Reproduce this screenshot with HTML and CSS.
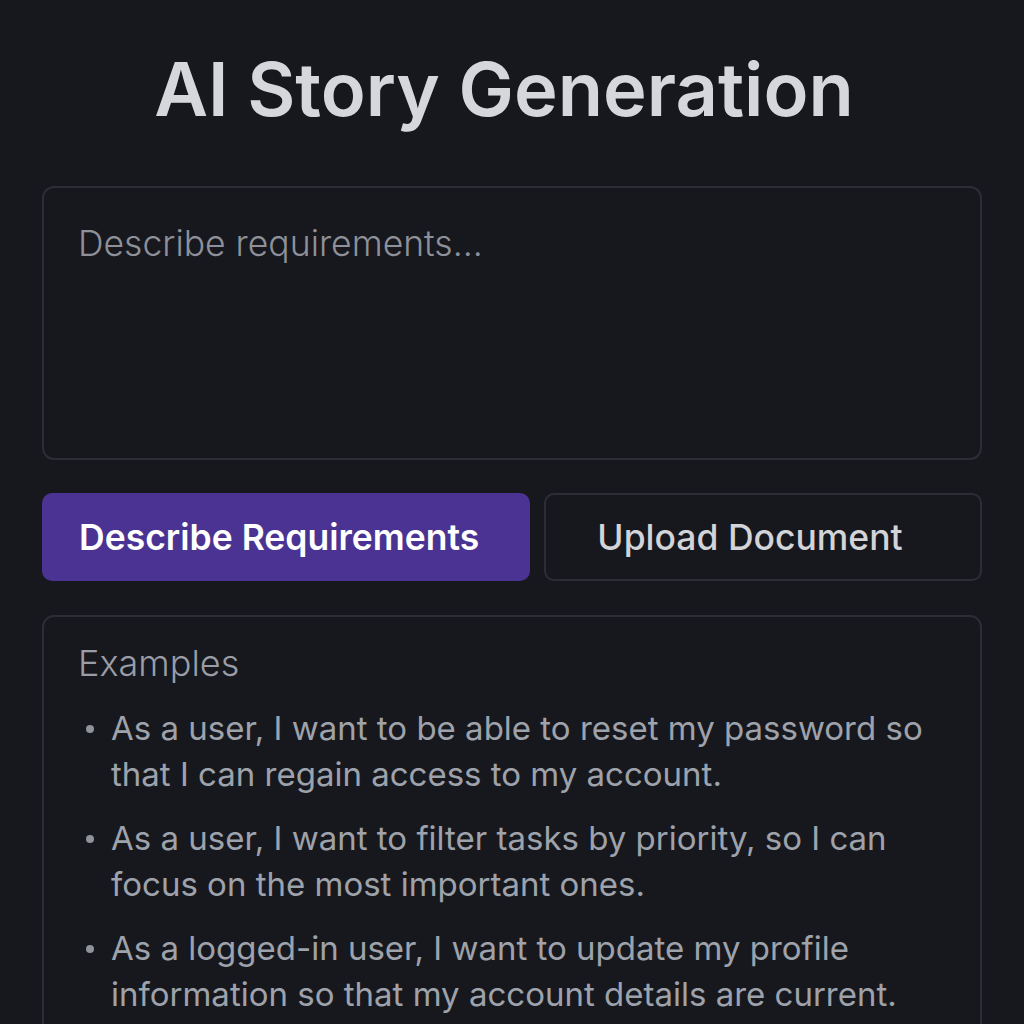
FILE: index.html
```html
<!DOCTYPE html>
<html lang="en">
<head>
<meta charset="utf-8">
<title>AI Story Generation</title>
<link rel="stylesheet" href="styles.css">
</head>
<body>
<main class="page">
  <h1 class="title">AI Story Generation</h1>
  <textarea class="req-input" placeholder="Describe requirements..."></textarea>
  <div class="tabs">
    <button class="tab tab-active">Describe Requirements</button>
    <button class="tab tab-outline">Upload Document</button>
  </div>
  <section class="examples">
    <h2 class="examples-title">Examples</h2>
    <ul class="example-list">
      <li>As a user, I want to be able to reset my password so that I can regain access to my account.</li>
      <li>As a user, I want to filter tasks by priority, so I can focus on the most important ones.</li>
      <li>As a logged-in user, I want to update my profile information so that my account details are current.</li>
    </ul>
  </section>
</main>
</body>
</html>
```
FILE: styles.css
```css
* { box-sizing: border-box; }
html, body { margin: 0; padding: 0; }
body {
  background: #17181e;
  font-family: Inter, "Noto Sans", sans-serif;
  color: #d6d7db;
  overflow: hidden;
  height: 1024px;
}
.page {
  padding: 0 42px;
  display: flex;
  flex-direction: column;
}
.title {
  margin: 0;
  height: 186px;
  display: flex;
  align-items: center;
  justify-content: center;
  padding: 0 16px 8px 0;
  font-size: 74px;
  font-weight: 600;
  color: #d6d7db;
  letter-spacing: 0;
}
.req-input {
  display: block;
  width: 100%;
  height: 274px;
  resize: none;
  background: #17181e;
  border: 2px solid #2c2e35;
  border-radius: 12px;
  padding: 34px 34px;
  font-family: Inter, "Noto Sans", sans-serif;
  font-size: 35.5px;
  font-weight: 300;
  color: #d6d7db;
  outline: none;
}
.req-input::placeholder { color: #8e919a; opacity: 1; }
.tabs {
  margin-top: 33px;
  display: flex;
  gap: 14px;
}
.tab {
  height: 88px;
  border-radius: 10px;
  font-family: Inter, "Noto Sans", sans-serif;
  font-size: 35.5px;
  font-weight: 600;
  cursor: pointer;
}
.tab-active {
  flex: 0 0 488px;
  background: #4a3392;
  border: none;
  color: #ffffff;
  text-align: left;
  padding: 0 37px;
}
.tab-outline {
  flex: 1;
  background: #17181e;
  border: 2px solid #2c2e35;
  color: #d3d4d8;
  font-weight: 500;
  padding: 0 26px 0 0;
}
.examples {
  margin-top: 34px;
  border: 2px solid #2c2e35;
  border-radius: 12px;
  padding: 24px 34px 40px;
}
.examples-title {
  margin: 0;
  font-size: 36px;
  font-weight: 300;
  color: #9a9da6;
  line-height: 44px;
}
.example-list {
  margin: 20px 0 0;
  padding: 0 0 0 33px;
  list-style: none;
  display: flex;
  flex-direction: column;
  gap: 18px;
}
.example-list li {
  position: relative;
  font-size: 33px;
  line-height: 46px;
  color: #9ea2ab;
  font-weight: 400;
}
.example-list li::before {
  content: "";
  position: absolute;
  left: -25px;
  top: 20px;
  width: 8px;
  height: 8px;
  border-radius: 50%;
  background: #8f939c;
}
```
